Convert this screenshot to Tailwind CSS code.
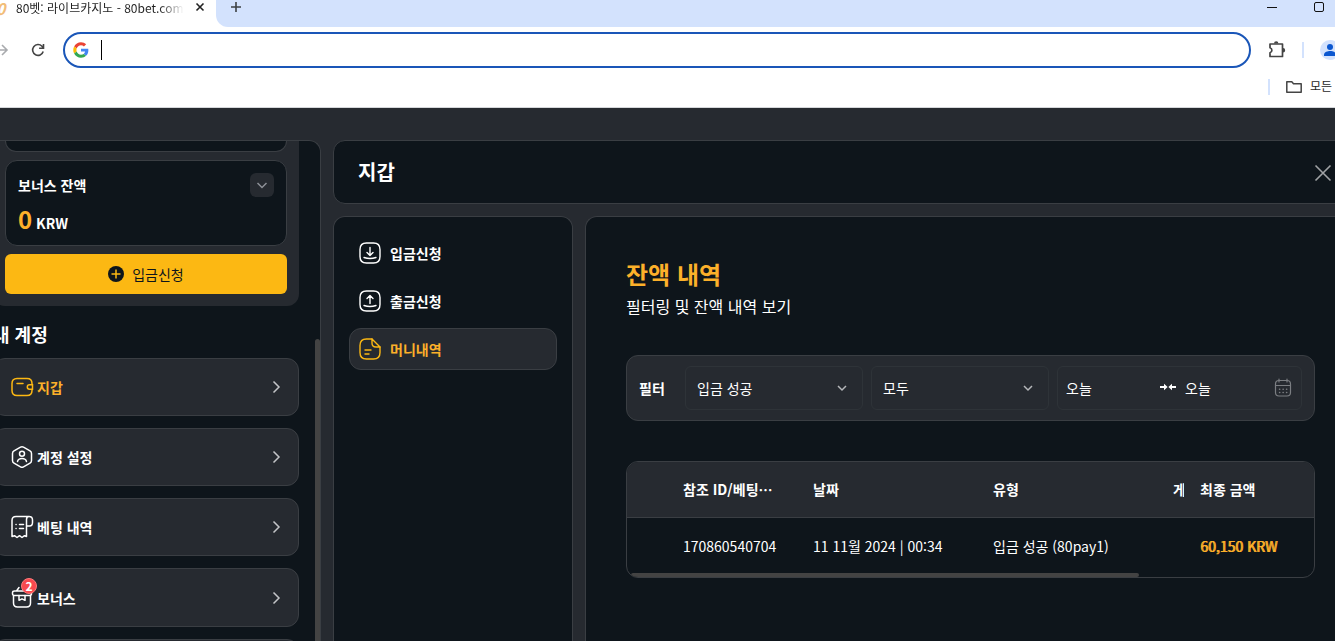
<!DOCTYPE html>
<html lang="ko">
<head>
<meta charset="utf-8">
<title>80벳: 라이브카지노</title>
<script src="https://cdn.jsdelivr.net/npm/@tailwindcss/browser@4"></script>
</head>
<body class="flex h-screen flex-col overflow-hidden bg-[#262a30] font-['Noto_Sans_CJK_KR',sans-serif] text-sm text-white">

<!-- Browser chrome -->
<header class="shrink-0 border-b border-[#d5d7da] bg-white text-[#1f1f1f]">
  <div class="flex h-[27px] bg-white">
    <div class="flex h-4 w-[216px] shrink-0 items-center text-xs">
      <span class="-ml-1 w-5 text-base leading-4 font-bold text-[#f2bd78] italic">0</span>
      <span class="w-[168px] overflow-hidden bg-linear-to-r from-[#1f1f1f] from-85% to-transparent bg-clip-text leading-4 whitespace-nowrap text-transparent">80벳: 라이브카지노 - 80bet.com</span>
      <button aria-label="탭 닫기" class="ml-2"><svg class="size-4" viewBox="0 0 16 16" fill="none" stroke="#222" stroke-width="1.6"><path d="M4.500 3.500l7 7M11.500 3.500l-7 7"/></svg></button>
    </div>
    <div class="flex flex-1 justify-between rounded-bl-xl bg-[#d3e2fd]">
      <button aria-label="새 탭" class="ml-3 size-4"><svg class="size-4" viewBox="0 0 16 16" stroke="#3c4043" stroke-width="1.6"><path d="M3 7h10M8 2v10"/></svg></button>
      <div class="flex h-4 gap-[30px] pr-[9px]">
        <button aria-label="최소화"><svg class="size-4" viewBox="0 0 16 16" stroke="#111"><path d="M3 7.500h10"/></svg></button>
        <button aria-label="최대화"><svg class="size-4" viewBox="0 0 16 16" fill="none" stroke="#111"><rect x="4.500" y="2.500" width="9" height="9" rx="1.500"/></svg></button>
      </div>
    </div>
  </div>
  <div class="flex h-[46px] items-center">
    <button aria-label="앞으로"><svg class="-ml-2 size-5" viewBox="0 0 20 20" fill="none" stroke="#a9abae" stroke-width="1.6"><path d="M3 10h12M10 5l5 5-5 5"/></svg></button>
    <button aria-label="새로고침" class="ml-4"><svg class="size-5" viewBox="0 0 20 20" fill="none" stroke="#444" stroke-width="1.600"><path d="M15.200 11.500A5.400 5.400 0 1 1 14 6.300L15.500 8M15.500 4v4.200h-4.400"/></svg></button>
    <label class="ml-[15px] flex h-9 flex-1 items-center rounded-full border-2 border-[#1a56b8] px-2">
      <svg class="size-4" viewBox="-1 -1 50 50"><path fill="#EA4335" d="M24 9.500c3.500 0 6.700 1.200 9.200 3.600l6.900-6.900C35.900 2.400 30.500 0 24 0 14.600 0 6.500 5.400 2.600 13.200l8 6.200C12.400 13.700 17.700 9.500 24 9.500z"/><path fill="#4285F4" d="M47 24.500c0-1.600-.2-3.100-.4-4.500H24v9h12.900c-.6 3-2.200 5.500-4.700 7.200l7.700 6c4.500-4.200 7.100-10.400 7.100-17.700z"/><path fill="#FBBC05" d="M10.500 28.600a14.500 14.500 0 0 1 0-9.200l-8-6.200a24 24 0 0 0 0 21.600l8-6.200z"/><path fill="#34A853" d="M24 48c6.500 0 11.900-2.100 15.900-5.800l-7.700-6c-2.200 1.500-4.900 2.300-8.200 2.300-6.300 0-11.600-4.200-13.500-9.900l-8 6.200C6.500 42.600 14.600 48 24 48z"/></svg>
      <span class="ml-3 h-5 w-px bg-black"></span>
      <input type="text" aria-label="주소창" class="flex-1 outline-none">
    </label>
    <button aria-label="확장 프로그램" class="ml-4"><svg class="size-5" viewBox="0 0 20 20" fill="none" stroke="#444" stroke-width="1.700"><path stroke-linejoin="round" d="M3 4h12.500v12.500H3V12.800a2.600 2.600 0 0 0 0-5z"/><path fill="#444" stroke="none" d="M7 3.500a2.200 2.200 0 0 1 4.400 0zM16 8a2.200 2.200 0 0 1 0 4.400z"/></svg></button>
    <span class="ml-[15px] h-4 w-0.5 bg-[#d3e2fd]"></span>
    <button aria-label="프로필" class="-mr-[5px] ml-4 size-5 rounded-full bg-[#d3e2fd]"><svg class="size-5" viewBox="0 0 20 20" fill="#0b57d0"><circle cx="10" cy="7" r="3"/><path d="M4 16v-1.500c0-2.500 4-3.500 6-3.500s6 1 6 3.500V16z"/></svg></button>
  </div>
  <div class="flex h-[34px] items-start justify-end pt-[3px]">
    <span class="mt-[3px] mr-4 h-4 w-0.5 bg-[#d3e2fd]"></span>
    <a href="#" class="flex items-center gap-2 pr-[3px] text-xs leading-5"><svg class="size-4" viewBox="0 0 16 16" fill="none" stroke="#444" stroke-width="1.500" stroke-linejoin="round"><path d="M.8 3.800h5l1.700 2h7.700v8.400H.8z"/></svg>모든</a>
  </div>
</header>

<div class="flex min-h-0 flex-1 gap-3 pt-8">

  <!-- Account sidebar, scrolled part-way -->
  <aside class="relative -ml-7 w-[349px] shrink-0 overflow-hidden rounded-tr-xl border-t border-r border-[#3a3e43] bg-[#0e151b] pr-[21px] pl-[21px]">
    <section class="rounded-b-xl bg-[#262a30] px-3 pb-3">
      <div class="h-[11px] rounded-b-xl border border-t-0 border-[#3a3e43] bg-[#0e151b]"></div>
      <div class="mt-2 h-[86px] rounded-xl border border-[#3a3e43] bg-[#0e151b] px-3 pt-3">
        <div class="flex items-center justify-between">
          <h3 class="leading-6 font-bold">보너스 잔액</h3>
          <button aria-label="펼치기" class="grid size-6 place-items-center rounded-md bg-[#262a30]"><svg class="size-4" viewBox="0 0 16 16" fill="none" stroke="#8d9197" stroke-width="1.500"><path d="M3.500 6L8 10.500 12.500 6"/></svg></button>
        </div>
        <p class="mt-2 leading-7 font-bold"><span class="text-2xl leading-7 text-[#fcb02a]">0</span> KRW</p>
      </div>
      <button class="mt-2 flex h-10 w-full items-center justify-center gap-2 rounded-md bg-[#fcb813] text-[#0e151b]"><svg class="size-4" viewBox="0 0 16 16"><circle cx="8" cy="8" r="8" fill="#0e151b"/><path d="M8 3.500v9M3.500 8h9" stroke="#fcb813" stroke-width="1.500"/></svg>입금신청</button>
    </section>
    <h2 class="mt-[14px] mb-[10px] text-lg leading-7 font-bold">내 계정</h2>
    <nav class="flex flex-col gap-3 font-bold">
      <a href="#" class="flex h-[58px] items-center gap-[3px] rounded-xl border border-[#3a3e43] bg-[#262a30] pr-3.5 pl-4 text-[#fcb02a]">
        <svg class="size-6" viewBox="0 0 24 24" fill="none" stroke="#fcb813" stroke-width="1.500" stroke-linecap="round"><path d="M22 9.500V8.500c0-3-1.700-5-5-5H7c-3.300 0-5 2-5 5v7c0 3 1.700 5 5 5h10c3.300 0 5-2 5-5v-1"/><path d="M7 8.500h6M22.500 9.800h-3a2.200 2.200 0 0 0 0 4.400h3z"/></svg>
        <span class="flex-1">지갑</span><svg class="size-4" viewBox="0 0 16 16" fill="none" stroke="#c3c5c8" stroke-width="1.500"><path d="M5.500 2.500L11 8l-5.500 5.500"/></svg></a>
      <a href="#" class="flex h-[58px] items-center gap-[3px] rounded-xl border border-[#3a3e43] bg-[#262a30] pr-3.5 pl-4">
        <svg class="size-6" viewBox="0 0 24 24" fill="none" stroke="#fff" stroke-width="1.500" stroke-linecap="round" stroke-linejoin="round"><path d="M10.500 2.200a3 3 0 0 1 3 0l6.500 3.600a3 3 0 0 1 1.500 2.600v7.200a3 3 0 0 1-1.500 2.600l-6.500 3.600a3 3 0 0 1-3 0L4 18.200a3 3 0 0 1-1.500-2.600V8.400A3 3 0 0 1 4 5.800z"/><circle cx="12" cy="8.800" r="2.500"/><path d="M7.500 16.500c.5-2 2.300-3 4.500-3s4 1 4.500 3"/></svg>
        <span class="flex-1">계정 설정</span><svg class="size-4" viewBox="0 0 16 16" fill="none" stroke="#c3c5c8" stroke-width="1.500"><path d="M5.500 2.500L11 8l-5.500 5.500"/></svg></a>
      <a href="#" class="flex h-[58px] items-center gap-[3px] rounded-xl border border-[#3a3e43] bg-[#262a30] pr-3.5 pl-4">
        <svg class="size-6" viewBox="0 0 24 24" fill="none" stroke="#fff" stroke-width="1.500" stroke-linecap="round" stroke-linejoin="round"><path d="M19.500 1.500H6C3.200 1.500 2 3 2 5.500v16l2.500-.8 2.500 1.800 2.500-1.800 2.500 1.800 2.500-1.800 2 .8V4.500c0-2 1-3 2.500-3 2 0 3.500 1.500 3.500 3.500v2.500c0 2-1.200 3.500-3 3.500h-3"/><path d="M9.500 9.500h4M9.500 13.500h4M6 9.500h.1M6 13.500h.1"/></svg>
        <span class="flex-1">베팅 내역</span><svg class="size-4" viewBox="0 0 16 16" fill="none" stroke="#c3c5c8" stroke-width="1.500"><path d="M5.500 2.500L11 8l-5.500 5.500"/></svg></a>
      <a href="#" class="flex h-[59px] items-center gap-[3px] rounded-xl border border-[#3a3e43] bg-[#262a30] pr-3.5 pl-4">
        <span class="relative">
          <svg class="size-6" viewBox="0 0 24 24" fill="none" stroke="#fff" stroke-width="1.500" stroke-linecap="round" stroke-linejoin="round"><path d="M3.500 9.500V17c0 2.500 1.500 4 4 4h9c2.500 0 4-1.500 4-4V9.500"/><path d="M4.500 5h15c1.300 0 2 .7 2 1.700v1.100c0 1-.7 1.700-2 1.700h-15c-1.300 0-2-.7-2-1.700V6.700C2.500 5.700 3.200 5 4.500 5zM6.500 5L9 1.500M17.500 5L15 1.500"/><path d="M9 9.500v4.800l3-1.500 3 1.500V9.500"/></svg>
          <span class="absolute -top-2 -right-[3px] grid size-4 place-items-center rounded-full border border-[#ff7a7a] bg-[#f8494f] text-xs leading-3">2</span>
        </span>
        <span class="flex-1">보너스</span><svg class="size-4" viewBox="0 0 16 16" fill="none" stroke="#c3c5c8" stroke-width="1.500"><path d="M5.500 2.500L11 8l-5.500 5.500"/></svg></a>
      <div class="h-[58px] shrink-0 rounded-xl border border-[#3a3e43] bg-[#262a30]"></div>
    </nav>
    <div class="absolute top-[198px] right-0 bottom-0 w-[5px] rounded-t-full bg-[#434343]"></div>
  </aside>

  <!-- Wallet dialog, wider than the window -->
  <main class="-mr-5 flex min-w-0 flex-1 flex-col gap-3">
    <div class="flex h-16 shrink-0 items-center justify-between rounded-xl border border-[#3a3e43] bg-[#0e151b] pr-[19px] pl-6">
      <h1 class="text-xl font-bold">지갑</h1>
      <button aria-label="닫기" class="pt-0.5"><svg class="size-6" viewBox="0 0 24 24" fill="none" stroke="#a0a2a5" stroke-width="1.600"><path d="M4.500 4.500l15 15M19.500 4.500l-15 15"/></svg></button>
    </div>
    <div class="flex min-h-0 flex-1 gap-3">
      <nav class="flex w-60 shrink-0 flex-col gap-1.5 rounded-t-xl border border-b-0 border-[#3a3e43] bg-[#0e151b] px-[15px] pt-[15px] font-bold">
        <a href="#" class="flex h-[42px] items-center gap-2 rounded-xl px-[9px]">
          <svg class="size-6" viewBox="0 0 24 24" fill="none" stroke="#fff" stroke-width="1.400" stroke-linecap="round" stroke-linejoin="round"><path d="M8.500 2h7c4.500 0 6.500 2 6.500 6.500v7c0 4.500-2 6.500-6.500 6.500h-7C4 22 2 20 2 15.500v-7C2 4 4 2 8.500 2z"/><path d="M12 6.500v8M9 11.500l3 3 3-3M6 16.500c4 1.300 8 1.300 12 0"/></svg>입금신청</a>
        <a href="#" class="flex h-[42px] items-center gap-2 rounded-xl px-[9px]">
          <svg class="size-6" viewBox="0 0 24 24" fill="none" stroke="#fff" stroke-width="1.400" stroke-linecap="round" stroke-linejoin="round"><path d="M8.500 2h7c4.500 0 6.500 2 6.500 6.500v7c0 4.500-2 6.500-6.500 6.500h-7C4 22 2 20 2 15.500v-7C2 4 4 2 8.500 2z"/><path d="M12 14.500v-8M9 9.500l3-3 3 3M6 16.500c4 1.300 8 1.300 12 0"/></svg>출금신청</a>
        <a href="#" class="flex h-[42px] items-center gap-2 rounded-xl border border-[#3a3e43] bg-[#262a30] px-2 text-[#fcb02a]">
          <svg class="size-6" viewBox="0 0 24 24" fill="none" stroke="#fcb813" stroke-width="1.400" stroke-linecap="round" stroke-linejoin="round"><path d="M22 10v5.500c0 4.500-2 6.500-6.500 6.500h-7C4 22 2 20 2 15.500v-7C2 4 4 2 8.500 2H14"/><path d="M22 10h-4c-3 0-4-1-4-4V2zM7 13h6M7 17h4"/></svg>머니내역</a>
      </nav>
      <section class="min-w-0 flex-1 rounded-tl-xl border-t border-l border-[#3a3e43] bg-[#0e151b] px-10 pt-[39px]">
        <h2 class="text-2xl leading-9 font-bold text-[#fcb02a]">잔액 내역</h2>
        <p class="text-base leading-7">필터링 및 잔액 내역 보기</p>
        <form class="mt-[35px] flex h-[66px] items-center gap-2 rounded-xl border border-[#3a3e43] bg-[#262a30] px-3">
          <span class="w-[38px] font-bold">필터</span>
          <div class="relative min-w-0 flex-1">
            <select aria-label="거래 유형" class="h-11 w-full appearance-none rounded-md border border-[#2e3338] px-[11px] outline-none"><option>입금 성공</option></select>
            <svg class="pointer-events-none absolute top-3.5 right-[13px] size-4" viewBox="0 0 16 16" fill="none" stroke="#b5b7ba" stroke-width="1.500"><path d="M4 6l4 4 4-4"/></svg>
          </div>
          <div class="relative min-w-0 flex-1">
            <select aria-label="상태" class="h-11 w-full appearance-none rounded-md border border-[#2e3338] px-[11px] outline-none"><option>모두</option></select>
            <svg class="pointer-events-none absolute top-3.5 right-[13px] size-4" viewBox="0 0 16 16" fill="none" stroke="#b5b7ba" stroke-width="1.500"><path d="M4 6l4 4 4-4"/></svg>
          </div>
          <div class="flex h-11 w-[245px] items-center rounded-md border border-[#2e3338] px-2">
            <input type="text" aria-label="시작일" value="오늘" class="w-[94px] outline-none">
            <svg class="mr-[9px] size-4 shrink-0" viewBox="0 0 16 16" fill="none" stroke="#fff" stroke-width="1.800"><path d="M0 7h6M16 7h-6"/><path fill="#fff" stroke="none" d="M4 3.800L7.600 7 4 10.200zM12 3.800L8.400 7l3.600 3.200z"/></svg>
            <input type="text" aria-label="종료일" value="오늘" class="w-0 min-w-0 flex-1 outline-none">
            <button type="button" aria-label="달력"><svg class="size-5" viewBox="0 0 20 20" fill="none" stroke="#7b7e82" stroke-width="1.200" stroke-linecap="round"><rect x="2.500" y="2.500" width="15" height="15.500" rx="3.500"/><path d="M2.500 7.500h15M6 1v3M14 1v3"/><path stroke-dasharray=".1 3.400" stroke-width="1.600" d="M6.600 11.200h8M6.600 14.500h8"/></svg></button>
          </div>
        </form>
        <div class="relative mt-10 overflow-hidden rounded-xl border border-[#3a3e43]">
          <table class="w-full table-fixed text-left whitespace-nowrap">
            <thead class="border-b border-[#3a3e43] bg-[#262a30]">
              <tr class="h-[55px]">
                <th class="w-10"></th>
                <th class="w-[130px] truncate px-4">참조 ID/베팅⋯</th>
                <th class="w-[180px] px-4">날짜</th>
                <th class="w-[180px] px-4">유형</th>
                <th class="overflow-hidden pl-4">게</th>
                <th class="w-[130px] px-4">최종 금액</th>
              </tr>
            </thead>
            <tbody>
              <tr class="h-[60px]">
                <td class="pb-[3px]"></td>
                <td class="px-4 pb-[3px]">170860540704</td>
                <td class="px-4 pb-[3px]">11 11월 2024 | 00:34</td>
                <td class="px-4 pb-[3px]">입금 성공 (80pay1)</td>
                <td></td>
                <td class="px-4 pb-[3px] text-[#fcb02a] [text-shadow:1px_0_currentColor]">60,150 KRW</td>
              </tr>
            </tbody>
          </table>
          <div class="absolute bottom-0 left-1 h-1 w-[74%] rounded-full bg-[#434343]"></div>
        </div>
      </section>
    </div>
  </main>
</div>
</body>
</html>
